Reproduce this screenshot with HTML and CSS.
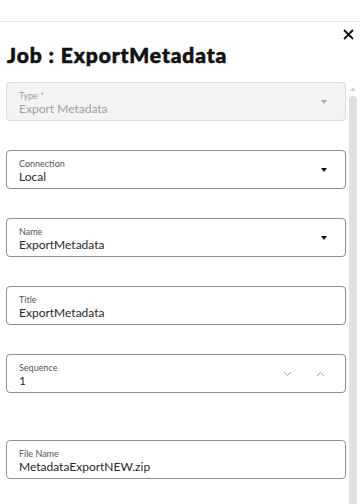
FILE: index.html
```html
<!DOCTYPE html>
<html>
<head>
<meta charset="utf-8">
<link rel="stylesheet" href="styles.css">
</head>
<body>
<div class="topbar"></div>
<div class="panel">
  <button class="close" aria-label="Close">
    <svg width="11" height="11" viewBox="0 0 11 11"><path d="M1 1L10 10M10 1L1 10" stroke="#111" stroke-width="1.8" fill="none"/></svg>
  </button>
  <h1 class="title">Job : ExportMetadata</h1>
  <div class="body">
    <div class="fields">
      <div class="field disabled">
        <div class="text">
          <div class="label">Type *</div>
          <div class="value">Export Metadata</div>
        </div>
        <span class="caret grey"></span>
      </div>
      <div class="field">
        <div class="text">
          <div class="label">Connection</div>
          <div class="value">Local</div>
        </div>
        <span class="caret"></span>
      </div>
      <div class="field">
        <div class="text">
          <div class="label">Name</div>
          <div class="value">ExportMetadata</div>
        </div>
        <span class="caret"></span>
      </div>
      <div class="field">
        <div class="text">
          <div class="label">Title</div>
          <div class="value">ExportMetadata</div>
        </div>
      </div>
      <div class="field">
        <div class="text">
          <div class="label">Sequence</div>
          <div class="value">1</div>
        </div>
        <div class="spin">
          <svg width="9" height="6" viewBox="0 0 9 6"><path d="M1 1L4.5 4.5L8 1" stroke="#9a9a9a" stroke-width="1" fill="none"/></svg>
          <svg width="9" height="6" viewBox="0 0 9 6"><path d="M1 5L4.5 1.5L8 5" stroke="#9a9a9a" stroke-width="1" fill="none"/></svg>
        </div>
      </div>
      <div class="field last">
        <div class="text">
          <div class="label">File Name</div>
          <div class="value">MetadataExportNEW.zip</div>
        </div>
      </div>
    </div>
    <div class="scrollbar">
      <span class="arrow"></span>
      <div class="thumb"></div>
    </div>
  </div>
</div>
</body>
</html>
```
FILE: styles.css
```css
* { box-sizing: border-box; }
html, body { margin: 0; padding: 0; background: #fff; }
body { width: 360px; height: 504px; overflow: hidden; font-family: "Lato", "Open Sans", sans-serif; }
.topbar { height: 22px; border-bottom: 1px solid #e2e2e2; }
.panel { position: relative; }
.close {
  position: absolute; top: 6px; right: 5px;
  width: 13px; height: 13px; padding: 1px; border: 0; background: none;
  display: flex; align-items: center; justify-content: center;
}
.title {
  margin: 0; padding: 21px 0 0 7px;
  font-family: "Lato", sans-serif; font-weight: 900; font-size: 21px; line-height: 24px;
  color: #111; letter-spacing: 0.9px; -webkit-text-stroke: 0.6px #111;
}
.body { display: flex; gap: 2px; margin-top: 15px; padding-left: 6px; }
.fields { width: 340px; display: flex; flex-direction: column; gap: 29px; }
.field {
  height: 39px; border: 1px solid #8e8e8e; border-radius: 4px;
  display: flex; align-items: flex-start; padding: 0 12px;
}
.field.last { margin-top: 18px; }
.field.disabled { background: #f3f3f3; border-color: #dcdcdc; }
.text { flex: 1; display: flex; flex-direction: column; padding-top: 7px; }
.label { font-size: 9px; line-height: 11px; color: #555; }
.value { font-size: 12px; line-height: 15px; color: #2a2a2a; }
.disabled .label, .disabled .value { color: #a0a0a0; }
.caret {
  align-self: center;
  width: 0; height: 0; margin-right: 6px;
  border-left: 3.5px solid transparent; border-right: 3.5px solid transparent;
  border-top: 4px solid #111;
}
.caret.grey { border-top-color: #a8a8a8; }
.spin { align-self: center; display: flex; gap: 24px; margin-right: 8px; align-items: center; }
.scrollbar { width: 9px; display: flex; flex-direction: column; align-items: center; padding-top: 5px; }
.arrow {
  width: 0; height: 0;
  border-left: 3px solid transparent; border-right: 3px solid transparent;
  border-bottom: 4px solid #d6d6d6;
}
.thumb { margin-top: 5px; width: 8px; height: 420px; background: #e1e1e1; border-radius: 4px 4px 0 0; }
```
